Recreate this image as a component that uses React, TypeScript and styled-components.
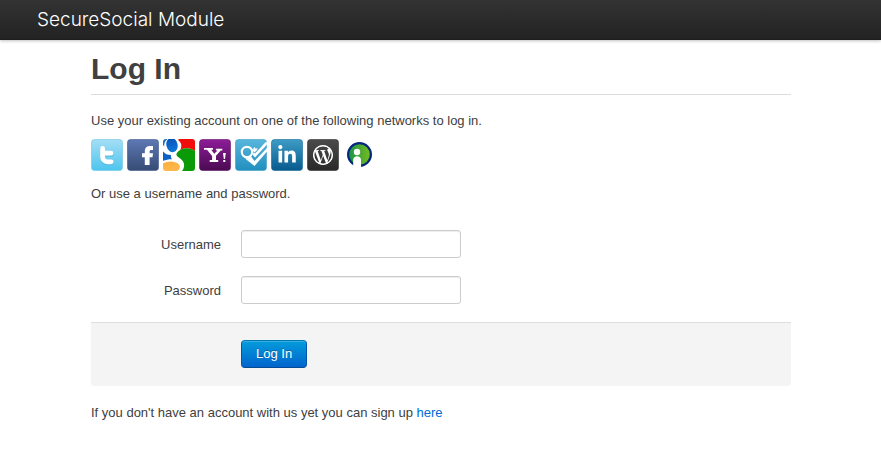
import React from "react";
import styled, { createGlobalStyle } from "styled-components";
import { FaWordpressSimple, FaLinkedinIn } from "react-icons/fa";

const GlobalStyle = createGlobalStyle`
  *, *::before, *::after { box-sizing: border-box; }
  body {
    margin: 0;
    background: #fff;
    color: #404040;
    font: 13px/18px "Helvetica Neue", "Liberation Sans", Arial, sans-serif;
  }
`;

const Navbar = styled.header`
  display: flex;
  align-items: center;
  height: 40px;
  padding: 0 37px;
  background: linear-gradient(#333, #222);
  box-shadow: 0 1px 3px rgba(0, 0, 0, 0.25), inset 0 -1px 0 rgba(0, 0, 0, 0.1);
`;

const Brand = styled.a`
  color: #fff;
  font-family: "Helvetica Neue", Inter, "Liberation Sans", sans-serif;
  font-size: 19px;
  font-weight: 300;
  line-height: 20px;
  text-decoration: none;
`;

const Page = styled.main`
  padding: 11px 90px 30px 91px;
`;

const Title = styled.h1`
  margin: 0 0 17px;
  padding-bottom: 7px;
  border-bottom: 1px solid #ddd;
  font-size: 30px;
  line-height: 36px;
`;

const Text = styled.p`
  margin: 0;
`;

const Networks = styled.nav`
  display: flex;
  gap: 4px;
  margin: 9px 0 14px;
`;

const NetworkLink = styled.a`
  display: block;
  width: 32px;
  height: 32px;

  svg { display: block; }
`;

const Form = styled.form`
  margin: 27px 0 18px;
`;

const Field = styled.div`
  display: flex;
  align-items: flex-start;
  gap: 20px;
  margin-bottom: 18px;
`;

const Label = styled.label`
  width: 130px;
  padding-top: 6px;
  text-align: right;
`;

const Input = styled.input`
  width: 220px;
  height: 28px;
  padding: 4px;
  border: 1px solid #ccc;
  border-radius: 3px;
  background: #fff;
  box-shadow: inset 0 1px 1px rgba(0, 0, 0, 0.075);
  color: #555;
  font: inherit;
`;

const Actions = styled.div`
  padding: 17px 20px 18px 150px;
  border-top: 1px solid #ddd;
  border-radius: 0 0 3px 3px;
  background: #f4f4f4;
`;

const SubmitButton = styled.button`
  display: block;
  height: 28px;
  padding: 0 14px;
  border: 1px solid;
  border-color: #0077b3 #0055aa #004a94;
  border-radius: 4px;
  background: linear-gradient(#049cdb, #0064cd);
  box-shadow: inset 0 1px 0 rgba(255, 255, 255, 0.2);
  color: #fff;
  font: inherit;
  text-shadow: 0 -1px 0 rgba(0, 0, 0, 0.25);
  cursor: pointer;
`;

const SignUpLink = styled.a`
  color: #0069d6;
  text-decoration: none;
`;

type TileProps = {
  id: string;
  from: string;
  to: string;
  edge: string;
  children: React.ReactNode;
};

function Tile({ id, from, to, edge, children }: TileProps) {
  return (
    <svg width="32" height="32" viewBox="0 0 32 32" aria-hidden="true">
      <defs>
        <linearGradient id={id} x1="0" y1="0" x2="0" y2="1">
          <stop offset="0" stopColor={from} />
          <stop offset="1" stopColor={to} />
        </linearGradient>
      </defs>
      <rect x="0.5" y="0.5" width="31" height="31" rx="3" fill={`url(#${id})`} stroke={edge} strokeOpacity="0.6" />
      {children}
    </svg>
  );
}

const TwitterIcon = () => (
  <Tile id="twitter" from="#a4def5" to="#4ec5ee" edge="#6fc4e3">
    <g fill="none" stroke="#2f9fc9" strokeOpacity="0.35" strokeWidth="5" strokeLinecap="round" transform="translate(0 1)">
      <path d="M11.6 9.4V18a4.8 4.8 0 0 0 4.8 4.8h3.8M12 14.2h8" />
    </g>
    <g fill="none" stroke="#fff" strokeWidth="4.8" strokeLinecap="round">
      <path d="M11.6 9.4V18a4.8 4.8 0 0 0 4.8 4.8h3.8M12 14.2h8" />
    </g>
  </Tile>
);

const FacebookIcon = () => (
  <Tile id="facebook" from="#5d78b3" to="#374c75" edge="#40578a">
    <path
      d="M17.8 26v-7.7H15v-4h2.8V12c0-3.400 2-5.100 5.200-5.100h3v4h-1.700c-1.200 0-1.700.5-1.700 1.600v1.800H26l-.5 4h-2.900V26z"
      fill="#fff"
    />
  </Tile>
);

const GoogleIcon = () => (
  <svg width="32" height="32" viewBox="0 0 32 32" aria-hidden="true">
    <defs>
      <clipPath id="google-tile">
        <rect width="32" height="32" rx="3" />
      </clipPath>
      <linearGradient id="google-blue" x1="0" y1="0" x2="0" y2="1">
        <stop offset="0" stopColor="#0a52b8" />
        <stop offset="1" stopColor="#0c7ada" />
      </linearGradient>
      <linearGradient id="google-yellow" x1="0" y1="0" x2="0" y2="1">
        <stop offset="0" stopColor="#fbb040" />
        <stop offset="1" stopColor="#fdb94d" />
      </linearGradient>
    </defs>
    <g clipPath="url(#google-tile)">
      <rect width="32" height="32" fill="#fff" />
      <path d="M15.500 0H32v12C26 8 20 9 17 11.500 19 8 19 4 15.500 1.500z" fill="#f20d0d" />
      <path d="M13.500 14.500C17 9 26 7.500 32 12v20H19c4-5 2-10-2.500-13-2-1.200-3.500-2.500-3-4.500z" fill="#0a9a08" />
      <path d="M0 0h4.500C2 2 1 4 1.200 7.500L0 6z" fill="#1c6cc4" />
      <path d="M0 12.500c2 2.500 4.500 3.500 8 3.500-.3 1.700 0 3 1 4.200-3.500 0-6.500.6-9 1.600z" fill="#0c62c4" />
      <ellipse cx="9" cy="6" rx="5.600" ry="7.200" fill="url(#google-blue)" transform="rotate(-14 9 6)" />
      <ellipse cx="7.500" cy="28" rx="9.500" ry="5.600" fill="url(#google-yellow)" />
    </g>
  </svg>
);

const YahooIcon = () => (
  <Tile id="yahoo" from="#8d1c98" to="#4b0a52" edge="#5f1268">
    <path
      d="M5 9h9v1.800h-1.800l3 4 3.400-3.400h-1.700V9.700h6.400v1.700h-1.600l-4.700 5.400v4.300h2.200V23h-8.500v-1.900h2.400v-4L8 10.800H5z"
      fill="#fff"
    />
    <path d="M24 14h2.800l-.8 6h-1.200zM24.300 21h2v2h-2z" fill="#fff" />
  </Tile>
);

const FoursquareIcon = () => (
  <Tile id="foursquare" from="#58b6dc" to="#218fbe" edge="#3c9dc6">
    <circle cx="12" cy="13" r="5.200" fill="none" stroke="#fff" strokeWidth="2.200" />
    <path d="M10 19.500l3.500-.5 2.500-1.500 3.500 4.500L32 9v3.500L19.500 27z" fill="#fff" />
    <path d="M17.500 15.500l2.500 3L32 5.500V3.200h-1.500L20 14.500l-1-1z" fill="#fff" />
    <path d="M19.500 8l1.200 1.800 2-.8-.9 2.200-2.300 2.300-1.500-1.500.3-2.500z" fill="#fff" />
  </Tile>
);

const LinkedInIcon = () => (
  <Tile id="linkedin" from="#3d9cc5" to="#075a8d" edge="#12699a">
    <FaLinkedinIn x="6" y="6" size={20} color="#fff" />
  </Tile>
);

const WordPressIcon = () => (
  <Tile id="wordpress" from="#4b4b4b" to="#292929" edge="#303030">
    <FaWordpressSimple x="6" y="6" size={20} color="#fff" />
    <circle cx="16" cy="16" r="9.400" fill="none" stroke="#fff" strokeWidth="1.200" />
  </Tile>
);

const MyOpenIdIcon = () => (
  <svg width="32" height="32" viewBox="0 0 32 32" aria-hidden="true">
    <defs>
      <linearGradient id="person-green" x1="0" y1="0" x2="1" y2="0">
        <stop offset="0" stopColor="#169447" />
        <stop offset="1" stopColor="#79bd20" />
      </linearGradient>
    </defs>
    <circle cx="16.500" cy="15.500" r="11.400" fill="url(#person-green)" stroke="#06277c" strokeWidth="2.200" />
    <circle cx="14" cy="13" r="3.200" fill="#fff" />
    <path d="M10.200 29v-8c0-5 7.800-5 7.800 0v8z" fill="#fff" />
  </svg>
);

const networks = [
  { name: "Twitter", Icon: TwitterIcon },
  { name: "Facebook", Icon: FacebookIcon },
  { name: "Google", Icon: GoogleIcon },
  { name: "Yahoo", Icon: YahooIcon },
  { name: "Foursquare", Icon: FoursquareIcon },
  { name: "LinkedIn", Icon: LinkedInIcon },
  { name: "WordPress", Icon: WordPressIcon },
  { name: "myOpenID", Icon: MyOpenIdIcon },
];

export default function App() {
  return (
    <>
      <GlobalStyle />
      <Navbar>
        <Brand href="#">SecureSocial Module</Brand>
      </Navbar>
      <Page>
        <Title>Log In</Title>
        <Text>Use your existing account on one of the following networks to log in.</Text>
        <Networks>
          {networks.map(({ name, Icon }) => (
            <NetworkLink key={name} href="#" aria-label={name}>
              <Icon />
            </NetworkLink>
          ))}
        </Networks>
        <Text>Or use a username and password.</Text>
        <Form onSubmit={(event) => event.preventDefault()}>
          <Field>
            <Label htmlFor="username">Username</Label>
            <Input id="username" type="text" />
          </Field>
          <Field>
            <Label htmlFor="password">Password</Label>
            <Input id="password" type="password" />
          </Field>
          <Actions>
            <SubmitButton type="submit">Log In</SubmitButton>
          </Actions>
        </Form>
        <Text>
          If you don't have an account with us yet you can sign up <SignUpLink href="#">here</SignUpLink>
        </Text>
      </Page>
    </>
  );
}
